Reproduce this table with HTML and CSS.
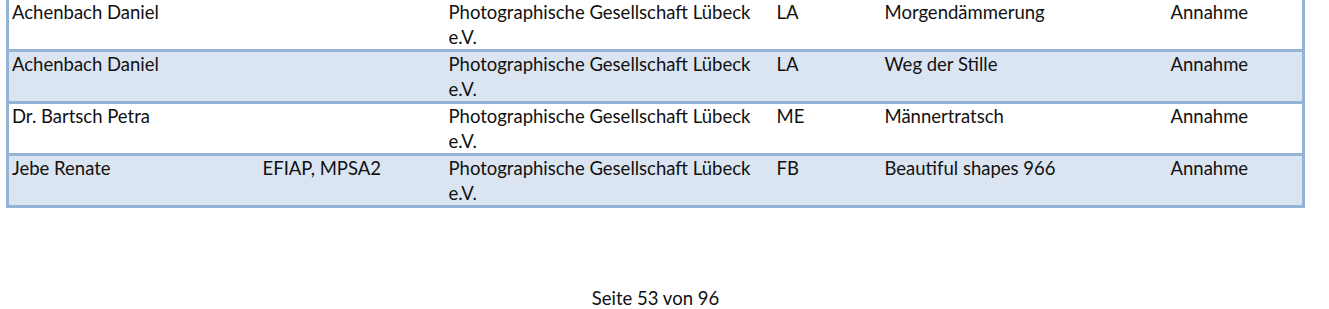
FILE: index.html
```html
<!DOCTYPE html>
<html lang="de">
<head>
<meta charset="utf-8">
<title>Seite 53 von 96</title>
<link rel="stylesheet" href="styles.css">
</head>
<body>
<div class="page">
  <table class="results">
    <colgroup>
      <col class="c-name"><col class="c-title"><col class="c-club"><col class="c-sec"><col class="c-work"><col class="c-status">
    </colgroup>
    <tbody>
      <tr>
        <td>Achenbach Daniel</td><td></td><td>Photographische Gesellschaft Lübeck e.V.</td><td>LA</td><td>Morgendämmerung</td><td>Annahme</td>
      </tr>
      <tr class="alt">
        <td>Achenbach Daniel</td><td></td><td>Photographische Gesellschaft Lübeck e.V.</td><td>LA</td><td>Weg der Stille</td><td>Annahme</td>
      </tr>
      <tr>
        <td>Dr. Bartsch Petra</td><td></td><td>Photographische Gesellschaft Lübeck e.V.</td><td>ME</td><td>Männertratsch</td><td>Annahme</td>
      </tr>
      <tr class="alt">
        <td>Jebe Renate</td><td>EFIAP, MPSA2</td><td>Photographische Gesellschaft Lübeck e.V.</td><td>FB</td><td>Beautiful shapes 966</td><td>Annahme</td>
      </tr>
    </tbody>
  </table>
  <div class="footer">Seite 53 von 96</div>
</div>
</body>
</html>
```
FILE: styles.css
```css
html, body {
  margin: 0;
  padding: 0;
  background: #ffffff;
}
body {
  font-family: Lato, "Open Sans", sans-serif;
  font-size: 18.5px;
  color: #111111;
}
.page {
  width: 1299px;
  margin-left: 6px;
  margin-top: -3px;
}
.results {
  width: 1299px;
  border-collapse: collapse;
  table-layout: fixed;
  border: 3px solid #95b3d7;
}
.c-name { width: 252px; }
.c-title { width: 186px; }
.c-club { width: 328px; }
.c-sec { width: 108px; }
.c-work { width: 286px; }
.c-status { width: auto; }
.results tr {
  border-top: 3px solid #95b3d7;
}
.results tr.alt {
  background: #dbe5f1;
}
.results td {
  vertical-align: top;
  padding: 0 10px 0 3px;
  line-height: 24.5px;
}
.footer {
  margin-top: 80px;
  text-align: center;
  line-height: 20px;
}
```
